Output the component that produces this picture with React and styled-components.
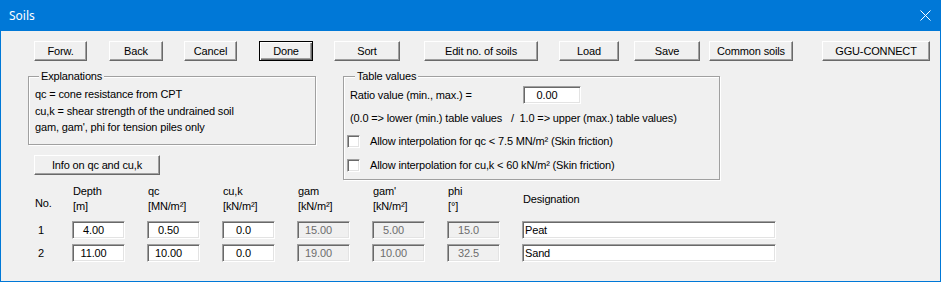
import React from 'react';
import styled, { createGlobalStyle, css } from 'styled-components';

const GlobalStyle = createGlobalStyle`
  html, body { margin: 0; padding: 0; background: #f0f0f0; }
  body {
    font-family: "Liberation Sans", Arial, sans-serif;
    font-size: 11px;
    letter-spacing: -0.15px;
    color: #000;
  }
`;

const Window = styled.div`
  width: 941px;
  height: 282px;
  box-sizing: border-box;
  border: 1px solid #0078d7;
  border-top: none;
  background: #f0f0f0;
  display: flex;
  flex-direction: column;
`;

const TitleBar = styled.div`
  height: 31px;
  flex: none;
  background: #0078d7;
  color: #fff;
  display: flex;
  align-items: center;
  justify-content: space-between;
  padding: 0 9px 0 8px;
  font-family: "Noto Sans", "Open Sans", sans-serif;
  font-size: 12px;
  letter-spacing: 0;
`;

const CloseIcon = styled.svg`
  display: block;
  width: 11px;
  height: 11px;
`;

const Content = styled.div`
  display: flex;
  flex-direction: column;
  padding-top: 10px;
`;

const ButtonRow = styled.div`
  display: flex;
  padding-left: 33px;
`;

const Btn = styled.button`
  box-sizing: border-box;
  width: ${(p) => p.$w}px;
  height: 20px;
  margin: 0 0 0 ${(p) => p.$ml || 0}px;
  padding: 0;
  font: inherit;
  letter-spacing: inherit;
  color: #000;
  background: #f0f0f0;
  border: 1px solid;
  border-color: #fff #696969 #696969 #fff;
  box-shadow: inset -1px -1px 0 #a0a0a0;
  ${(p) =>
    p.$default &&
    css`
      border-color: #000;
      box-shadow: inset 1px 1px 0 #fff, inset -1px -1px 0 #696969,
        inset -2px -2px 0 #a0a0a0;
    `}
`;

const MiddleRow = styled.div`
  display: flex;
  margin-top: 15px;
  height: 104px;
`;

const LeftColumn = styled.div`
  display: flex;
  flex-direction: column;
  align-items: flex-start;
  padding-left: 27px;
`;

const GroupBox = styled.div`
  position: relative;
  box-sizing: border-box;
  width: ${(p) => p.$w}px;
  height: ${(p) => p.$h}px;
  margin-left: ${(p) => p.$ml || 0}px;
  border: 1px solid #a0a0a0;
  box-shadow: inset 1px 1px 0 #fff, 1px 1px 0 #fff;
  display: flex;
  flex-direction: column;
  padding-top: ${(p) => p.$pt || 0}px;
`;

const GroupLabel = styled.span`
  position: absolute;
  top: -7px;
  left: ${(p) => p.$left}px;
  padding: 0 2px;
  line-height: 13px;
  background: #f0f0f0;
`;

const ExplainText = styled.div`
  padding-left: 6px;
  line-height: 16.5px;
`;

const InfoButton = styled(Btn)`
  margin-top: 10px;
  margin-left: 6px;
`;

const RatioRow = styled.div`
  display: flex;
  align-items: center;
  height: 18px;
  padding-left: 6px;
`;

const RatioLabel = styled.span`
  width: 173px;
`;

const NoteLine = styled.div`
  margin-top: 7px;
  padding-left: 6px;
  line-height: 14px;
  white-space: pre;
`;

const CheckRow = styled.div`
  display: flex;
  align-items: center;
  gap: 10px;
  height: 16px;
  margin-top: 8px;
  padding-left: 3px;
`;

const CheckBox = styled.span`
  box-sizing: border-box;
  width: 13px;
  height: 13px;
  background: #fff;
  border: 1px solid;
  border-color: #a0a0a0 #fff #fff #a0a0a0;
  box-shadow: inset 1px 1px 0 #696969, inset -1px -1px 0 #e3e3e3;
`;

const Field = styled.input`
  box-sizing: border-box;
  width: ${(p) => p.$w}px;
  height: 18px;
  margin: 0;
  font: inherit;
  letter-spacing: inherit;
  color: ${(p) => (p.$disabled ? '#6d6d6d' : '#000')};
  background: ${(p) => (p.$disabled ? '#f0f0f0' : '#fff')};
  border: 1px solid;
  border-color: #a0a0a0 #fff #fff #a0a0a0;
  box-shadow: inset 1px 1px 0 #696969, inset -1px -1px 0 #e3e3e3;
  outline: none;
  text-align: ${(p) => (p.$left ? 'left' : 'center')};
  padding: ${(p) => (p.$left ? '0 0 0 2px' : '0 12px 0 2px')};
`;

const Table = styled.div`
  display: grid;
  grid-template-columns: 38px repeat(6, 75px) 254px;
  grid-template-rows: 32px 18px 18px;
  row-gap: 5px;
  padding-left: 33px;
  margin-top: 4px;
`;

const HeadCell = styled.div`
  line-height: 15px;
  padding-left: 1px;
  padding-top: ${(p) => p.$pt || 0}px;
`;

const RowNum = styled.div`
  line-height: 18px;
  padding-left: 4px;
`;

const buttons = [
  { label: 'Forw.', w: 53, ml: 0 },
  { label: 'Back', w: 54, ml: 22 },
  { label: 'Cancel', w: 53, ml: 21 },
  { label: 'Done', w: 54, ml: 22, def: true },
  { label: 'Sort', w: 66, ml: 21 },
  { label: 'Edit no. of soils', w: 114, ml: 24 },
  { label: 'Load', w: 60, ml: 21 },
  { label: 'Save', w: 66, ml: 15 },
  { label: 'Common soils', w: 84, ml: 9 },
  { label: 'GGU-CONNECT', w: 108, ml: 29 },
];

const columns = [
  ['Depth', '[m]'],
  ['qc', '[MN/m²]'],
  ['cu,k', '[kN/m²]'],
  ['gam', '[kN/m²]'],
  ["gam'", '[kN/m²]'],
  ['phi', '[°]'],
];

const rows = [
  { no: '1', values: ['4.00', '0.50', '0.0', '15.00', '5.00', '15.0'], name: 'Peat' },
  { no: '2', values: ['11.00', '10.00', '0.0', '19.00', '10.00', '32.5'], name: 'Sand' },
];

export default function App() {
  return (
    <>
      <GlobalStyle />
      <Window>
        <TitleBar>
          <span>Soils</span>
          <CloseIcon viewBox="0 0 11 11">
            <path d="M0.5 0.5 L10.5 10.5 M10.5 0.5 L0.5 10.5" stroke="#fff" strokeWidth="1" fill="none" />
          </CloseIcon>
        </TitleBar>
        <Content>
          <ButtonRow>
            {buttons.map((b) => (
              <Btn key={b.label} $w={b.w} $ml={b.ml} $default={b.def}>
                {b.label}
              </Btn>
            ))}
          </ButtonRow>
          <MiddleRow>
            <LeftColumn>
              <GroupBox $w={288} $h={69} $pt={9}>
                <GroupLabel $left={10}>Explanations</GroupLabel>
                <ExplainText>
                  qc = cone resistance from CPT
                  <br />
                  cu,k = shear strength of the undrained soil
                  <br />
                  gam, gam', phi for tension piles only
                </ExplainText>
              </GroupBox>
              <InfoButton $w={126}>Info on qc and cu,k</InfoButton>
            </LeftColumn>
            <GroupBox $w={377} $h={104} $ml={27} $pt={9}>
              <GroupLabel $left={11}>Table values</GroupLabel>
              <RatioRow>
                <RatioLabel>Ratio value (min., max.) =</RatioLabel>
                <Field $w={58} readOnly value="0.00" />
              </RatioRow>
              <NoteLine>{'(0.0 => lower (min.) table values   /  1.0 => upper (max.) table values)'}</NoteLine>
              <CheckRow>
                <CheckBox />
                <span>Allow interpolation for qc &lt; 7.5 MN/m² (Skin friction)</span>
              </CheckRow>
              <CheckRow>
                <CheckBox />
                <span>Allow interpolation for cu,k &lt; 60 kN/m² (Skin friction)</span>
              </CheckRow>
            </GroupBox>
          </MiddleRow>
          <Table>
            <HeadCell $pt={12}>No.</HeadCell>
            {columns.map(([a, b]) => (
              <HeadCell key={a}>
                {a}
                <br />
                {b}
              </HeadCell>
            ))}
            <HeadCell $pt={8}>Designation</HeadCell>
            {rows.map((r) => (
              <React.Fragment key={r.no}>
                <RowNum>{r.no}</RowNum>
                {r.values.map((v, i) => (
                  <div key={i}>
                    <Field $w={53} readOnly value={v} $disabled={i >= 3} />
                  </div>
                ))}
                <div>
                  <Field $w={254} readOnly value={r.name} $left />
                </div>
              </React.Fragment>
            ))}
          </Table>
        </Content>
      </Window>
    </>
  );
}
